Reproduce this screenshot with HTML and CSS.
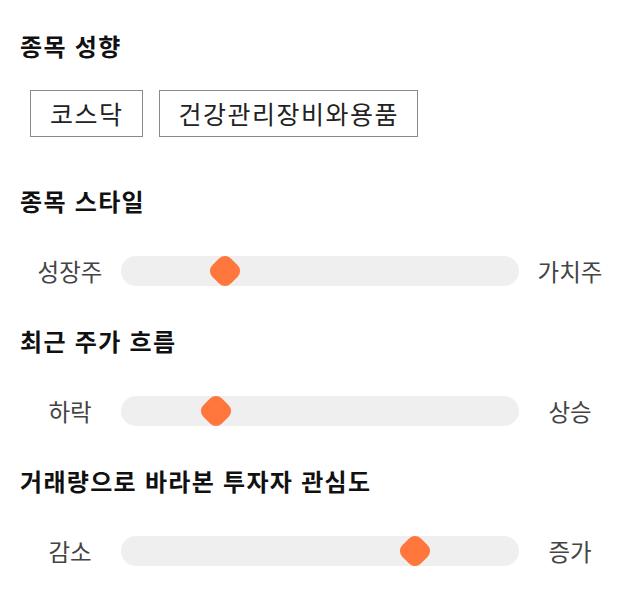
FILE: index.html
```html
<!DOCTYPE html>
<html lang="ko">
<head>
<meta charset="utf-8">
<link rel="stylesheet" href="styles.css">
</head>
<body>
<div class="page">
  <h2 class="title">종목 성향</h2>
  <div class="tags">
    <span class="tag">코스닥</span>
    <span class="tag">건강관리장비와용품</span>
  </div>

  <h2 class="title gap-lg">종목 스타일</h2>
  <div class="slider">
    <span class="label">성장주</span>
    <div class="track"><span class="thumb" style="left:26.25%"></span></div>
    <span class="label">가치주</span>
  </div>

  <h2 class="title gap-md">최근 주가 흐름</h2>
  <div class="slider">
    <span class="label">하락</span>
    <div class="track"><span class="thumb" style="left:23.75%"></span></div>
    <span class="label">상승</span>
  </div>

  <h2 class="title gap-md">거래량으로 바라본 투자자 관심도</h2>
  <div class="slider">
    <span class="label">감소</span>
    <div class="track"><span class="thumb" style="left:73.75%"></span></div>
    <span class="label">증가</span>
  </div>
</div>
</body>
</html>
```

FILE: styles.css
```css
html, body {
  margin: 0;
  padding: 0;
  background: #ffffff;
}

body {
  font-family: "Noto Sans CJK KR", "Noto Sans", sans-serif;
}

.page {
  padding: 30px 20px 0;
  display: flex;
  flex-direction: column;
}

.title {
  margin: 0;
  font-size: 24px;
  line-height: 32px;
  letter-spacing: 1.3px;
  font-weight: 700;
  color: #111111;
}

.gap-lg {
  margin-top: 48px;
}

.gap-md {
  margin-top: 39px;
}

.tags {
  margin-top: 28px;
  padding-left: 10px;
  display: flex;
  gap: 16px;
}

.tag {
  border: 1px solid #8a8a8a;
  padding: 7px 18px 7px 19px;
  font-size: 25px;
  line-height: 31px;
  letter-spacing: 1.5px;
  color: #222222;
}

.slider {
  margin-top: 39px;
  display: grid;
  grid-template-columns: 100px 1fr 100px;
  align-items: center;
}

.label {
  text-align: center;
  font-size: 23.5px;
  line-height: 30px;
  color: #444444;
}

.track {
  position: relative;
  height: 30px;
  border-radius: 15px;
  background: #efefef;
  margin: 0 1px;
}

.thumb {
  position: absolute;
  top: 50%;
  width: 26px;
  height: 26px;
  border-radius: 8px;
  background: #ff773d;
  transform: translate(-50%, -50%) rotate(45deg);
}
```
